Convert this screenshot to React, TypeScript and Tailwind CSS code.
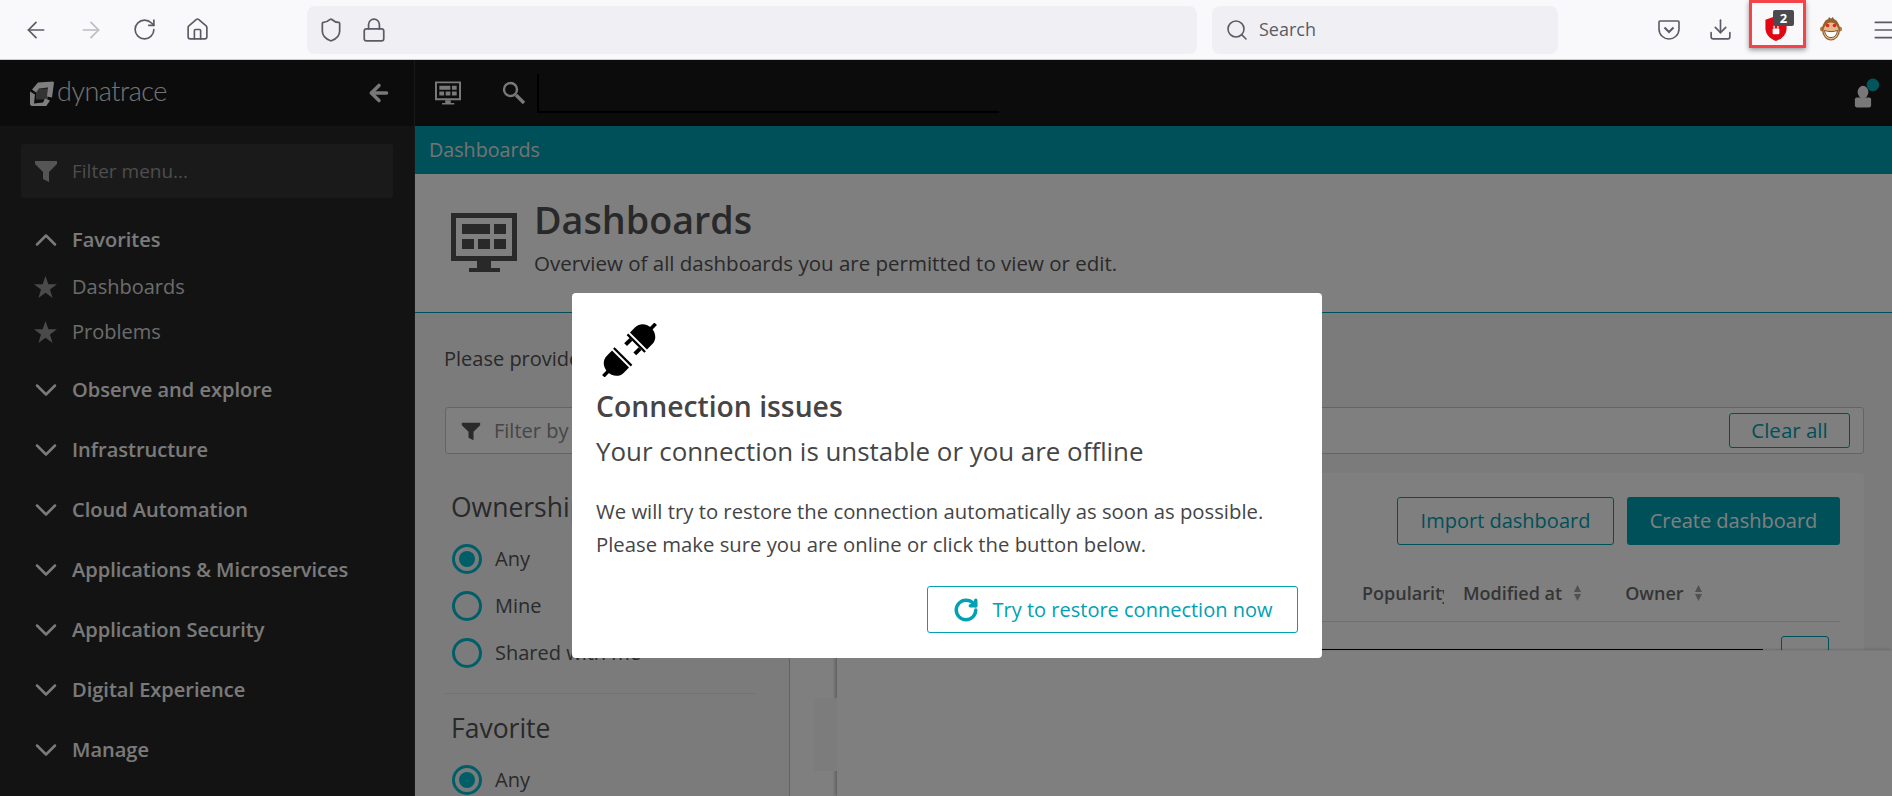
import { ArrowLeft, ChevronDown, ChevronUp, Download, Home, Lock, Menu, RotateCw, Search, Shield } from 'lucide-react';

const sections = ['Observe and explore', 'Infrastructure', 'Cloud Automation', 'Applications & Microservices', 'Application Security', 'Digital Experience', 'Manage'];

function MonitorIcon({ className }: { className: string }) {
  return (
    <svg viewBox="0 0 66 59" className={className} fill="currentColor">
      <path d="M0 0h66v48H0zM5 5v38h56V5z" fillRule="evenodd" />
      <path d="M11 11h28v10H11zM43 11h12v10H43zM11 26h12v10H11zM27 26h12v10H27zM43 26h12v10H43zM26 48h14v7h9v4H18v-4h8z" />
    </svg>
  );
}

function Logo() {
  return (
    <svg viewBox="0 0 24 24" className="w-[24px] h-[25px]" fill="currentColor">
      <path d="M8 1 23 0l1 1-2 15-5-1 1-9-9 1-3 4-4-3zM0 10l5 3-1 9 9-1 2-4 5 2-4 6-13 1-3-3z" />
      <path d="M6 7h12v11H6z" opacity="0.35" />
    </svg>
  );
}

function Plug() {
  return (
    <svg viewBox="0 0 57 54" className="w-[57px] h-[54px]" fill="#000">
      <g transform="translate(28.5 27) rotate(-45)">
        <rect x="-37" y="-1.8" width="9" height="3.6" />
        <path d="M-12.7 -12V12H-20C-27 12 -31 6 -31 0S-27 -12 -20 -12Z" />
        <rect x="-10.7" y="-12.5" width="2.2" height="25" />
        <rect x="1" y="-8.5" width="7.5" height="4" />
        <rect x="1" y="4.5" width="7.5" height="4" />
        <rect x="8.5" y="-12.5" width="2.2" height="25" />
        <path d="M12.7 -12V12H20C27 12 31 6 31 0S27 -12 20 -12Z" />
        <rect x="28" y="-1.8" width="9" height="3.6" />
      </g>
    </svg>
  );
}

function Monkey() {
  return (
    <svg viewBox="0 0 22 24" className="w-[22px] h-[24px]">
      <path d="M8 3 9 0l2 2 2-2 1 3z" fill="#7a4a22" />
      <circle cx="2.5" cy="12" r="2.5" fill="#b57a40" />
      <circle cx="19.5" cy="12" r="2.5" fill="#b57a40" />
      <ellipse cx="11" cy="12.5" rx="9" ry="11" fill="#94602e" />
      <ellipse cx="11" cy="14" rx="7.5" ry="8.5" fill="#e6b98a" />
      <circle cx="7.5" cy="8.5" r="1.8" fill="#e5231c" />
      <circle cx="14.5" cy="8.5" r="1.8" fill="#e5231c" />
      <path d="M4.5 13.5c4.5 1.5 8.5 1.5 13 0-1 5.5-3.5 7-6.5 7s-5.5-1.5-6.5-7z" fill="#fff" stroke="#5c3517" strokeWidth="0.8" />
    </svg>
  );
}

function StarIcon() {
  return (
    <svg viewBox="0 0 24 24" className="w-[23px] h-[23px]" fill="#949494">
      <path d="M12 0l3 8.7h9l-7.3 5.5L19.4 23 12 17.6 4.6 23l2.7-8.8L0 8.7h9z" />
    </svg>
  );
}

function SortIcon() {
  return (
    <svg viewBox="0 0 10 18" className="w-[9px] h-[16px]" fill="#a3a3a3">
      <path d="M5 0l4 8H1zM1 10h8l-4 8z" />
    </svg>
  );
}

function Radio({ label, checked }: { label: string; checked?: boolean }) {
  return (
    <div className="flex items-center gap-[13px] h-[30px] mb-[17px] text-[20px] text-[#555]">
      <span className="w-[30px] h-[30px] rounded-full border-[3px] border-[#00bdd0] flex items-center justify-center shrink-0">
        {checked && <span className="w-[16px] h-[16px] rounded-full bg-[#00bdd0]" />}
      </span>
      {label}
    </div>
  );
}

export default function App() {
  return (
    <div className="h-[796px] w-[1892px] overflow-hidden flex flex-col bg-white font-['Open_Sans',sans-serif]">
      <header className="h-[60px] shrink-0 flex items-center bg-[#f9f9fb] border-b border-[#ccc] text-[#5b5b66]">
        <ArrowLeft size={26} strokeWidth={1.6} className="ml-[23px] shrink-0" />
        <ArrowLeft size={26} strokeWidth={1.6} className="ml-[29px] rotate-180 text-[#bdbdc2] shrink-0" />
        <RotateCw size={25} strokeWidth={1.6} className="ml-[28px] shrink-0" />
        <Home size={25} strokeWidth={1.6} className="ml-[28px] shrink-0" />
        <div className="ml-[97px] w-[890px] h-[48px] shrink-0 bg-[#f0f0f4] rounded-lg flex items-center pl-[11px] gap-[17px]">
          <Shield size={26} strokeWidth={1.6} />
          <Lock size={26} strokeWidth={1.6} />
        </div>
        <div className="ml-[15px] w-[346px] h-[48px] shrink-0 bg-[#f0f0f4] rounded-lg flex items-center pl-[13px] gap-[10px] text-[18px]">
          <Search size={24} strokeWidth={1.6} />
          Search
        </div>
        <svg viewBox="0 0 22 22" className="ml-[100px] w-[22px] h-[22px] shrink-0" fill="none" stroke="currentColor" strokeWidth="1.6">
          <path d="M2 2h18a1 1 0 0 1 1 1v7c0 6-5 10-10 10S1 16 1 10V3a1 1 0 0 1 1-1z" />
          <path d="M6.5 8.5 11 13l4.5-4.5" strokeWidth="2" />
        </svg>
        <Download size={25} strokeWidth={1.6} className="ml-[28px] shrink-0" />
        <div className="relative ml-[16px] w-[57px] h-[48px] self-start shrink-0 border-[3px] border-[#f5434a] shadow-[0_2px_5px_rgba(0,0,0,0.4)]">
          <svg viewBox="0 0 22 26" className="absolute left-[13px] top-[13px] w-[22px] h-[25px]">
            <path d="M11 0 22 4v9c0 6-5 11-11 13C5 24 0 19 0 13V4z" fill="#e30613" />
            <rect x="7.5" y="13" width="7" height="6" rx="1" fill="#fff" />
            <path d="M9 13v-2a2 2 0 0 1 4 0v2" fill="none" stroke="#fff" strokeWidth="1.2" />
          </svg>
          <span className="absolute left-[21px] top-[7px] w-[21px] h-[16px] rounded-[2px] bg-[#4a4a4f] text-white text-[13px] font-bold leading-[16px] text-center">2</span>
        </div>
        <div className="ml-[14px] mt-[-1px] shrink-0"><Monkey /></div>
        <Menu size={26} strokeWidth={1.6} className="ml-[29px] shrink-0" />
      </header>

      <div className="relative flex-1 flex min-h-0">
        <aside className="w-[414px] shrink-0 bg-[#262626] flex flex-col text-white">
          <div className="h-[66px] shrink-0 bg-[#181818] flex items-center pl-[30px] pr-[22px]">
            <Logo />
            <span className="ml-[3px] -mt-[3px] text-[27px] font-light tracking-[-0.5px] font-['Lato',sans-serif] text-[#e8e8e8]">dynatrace</span>
            <ArrowLeft size={26} strokeWidth={3.2} className="ml-auto text-[#f0f0f0]" />
          </div>
          <div className="mx-[21px] mt-[18px] h-[54px] rounded-[3px] bg-[#353535] flex items-center pl-[13px] gap-[14px] text-[19px] text-[#9a9a9a]">
            <svg viewBox="0 0 24 24" className="w-[24px] h-[24px]" fill="#aaa"><path d="M1 2h22v3l-8 8v10l-6-3v-7L1 5z" /></svg>
            Filter menu...
          </div>
          <div className="mt-[27px] pl-[34px]">
            <div className="flex items-center gap-[15px] h-[30px] text-[20px] font-semibold text-[#f5f5f5]">
              <ChevronUp size={36} strokeWidth={1.7} className="-mx-[6.5px] shrink-0" />
              Favorites
            </div>
            {['Dashboards', 'Problems'].map((item, i) => (
              <div key={item} className={`flex items-center gap-[15px] h-[30px] text-[20px] text-[#d8d8d8] ${i === 0 ? 'mt-[17px]' : 'mt-[15px]'}`}>
                <StarIcon />
                {item}
              </div>
            ))}
            {sections.map((item, i) => (
              <div key={item} className={`flex items-center gap-[15px] h-[30px] text-[20px] font-semibold text-[#f5f5f5] ${i === 0 ? 'mt-[28px]' : 'mt-[30px]'}`}>
                <ChevronDown size={36} strokeWidth={1.7} className="-mx-[6.5px] shrink-0" />
                {item}
              </div>
            ))}
          </div>
        </aside>

        <main className="relative flex-1 min-w-0 flex flex-col border-l border-[#333]">
          <div className="h-[66px] shrink-0 bg-[#181818] flex items-center pl-[20px] text-[#f2f2f2]">
            <MonitorIcon className="w-[26px] h-[24px]" />
            <svg viewBox="0 0 24 24" className="ml-[41px] w-[24px] h-[24px] shrink-0" fill="none" stroke="currentColor">
              <circle cx="8.5" cy="8.5" r="6.5" strokeWidth="2.4" />
              <path d="M14 14l8 8" strokeWidth="3.4" />
            </svg>
            <div className="ml-[11px] w-[462px] h-[39px] border-l-2 border-b-2 border-black" />
            <svg viewBox="0 0 30 32" className="ml-auto mr-[11px] w-[27px] h-[32px]">
              <circle cx="21" cy="7" r="7" fill="#00d0dc" opacity="0.8" />
              <ellipse cx="10" cy="15" rx="6" ry="7" fill="#f0f0f0" />
              <rect x="1" y="21" width="18" height="11" rx="2" fill="#f0f0f0" />
            </svg>
          </div>
          <div className="h-[48px] shrink-0 bg-[#00a1b2] flex items-center pl-[14px] text-[19.7px] text-[#e6e6e6]">Dashboards</div>
          <div className="h-[139px] shrink-0 border-b border-[#00a1b2] bg-white flex pl-[36px] pt-[39px]">
            <MonitorIcon className="w-[66px] h-[59px] text-[#525252]" />
            <div className="ml-[17px] -mt-[20px]">
              <h1 className="text-[37.7px] leading-[53px] mb-[4px] font-semibold text-[#525252]">Dashboards</h1>
              <p className="text-[20.5px] leading-[26px] text-[#525252] whitespace-nowrap">Overview of all dashboards you are permitted to view or edit.</p>
            </div>
          </div>

          <div className="flex-1 min-h-0 bg-[#f6f6f6] flex flex-col overflow-hidden">
            <p className="ml-[29px] mt-[33px] text-[20px] leading-[26px] text-[#525252]">Please provide</p>
            <div className="ml-[30px] mr-[28px] mt-[35px] h-[47px] shrink-0 rounded-[3px] border border-[#c8c8c8] bg-white flex items-center pl-[15px] pr-[13px] gap-[13px] text-[20px] text-[#8c8c8c]">
              <svg viewBox="0 0 24 24" className="w-[20px] h-[20px]" fill="#555"><path d="M1 2h22v3l-8 8v10l-6-3v-7L1 5z" /></svg>
              Filter by
              <button className="ml-auto w-[121px] h-[35px] rounded-[3px] border border-[#00a1b2] text-[#00a1b2] text-[20.5px]">Clear all</button>
            </div>
            <div className="flex flex-1 min-h-0 mt-[19px] mr-[28px]">
              <div className="w-[375px] shrink-0 pl-[37px] pr-[33px] pt-[17px] border-r border-[#c4c4c4]">
                <h2 className="text-[26.5px] leading-[34px] text-[#525252] -ml-[1px] mb-[20px]">Ownership</h2>
                <Radio label="Any" checked />
                <Radio label="Mine" />
                <Radio label="Shared with me" />
                <div className="-ml-[7px] border-t border-[#e6e6e6] mt-[25px]" />
                <h2 className="text-[26.5px] leading-[34px] text-[#525252] -ml-[1px] mt-[17px] mb-[20px]">Favorite</h2>
                <Radio label="Any" checked />
              </div>
              <div className="flex-1 min-w-0 bg-white pr-[24px] pt-[24px] rounded-tr-[4px]">
                <div className="flex justify-end gap-[13px]">
                  <button className="w-[217px] h-[48px] rounded-[3px] border border-[#00a1b2] text-[#00a1b2] text-[20px]">Import dashboard</button>
                  <button className="w-[213px] h-[48px] rounded-[3px] bg-[#00a1b2] text-white text-[20px]">Create dashboard</button>
                </div>
                <div className="flex items-end pb-[14px] h-[77px] border-b border-[#e0e0e0] ml-[400px] pl-[172px] text-[18px] font-semibold text-[#6b6b6b]">
                  <span className="w-[82px] overflow-hidden shrink-0 whitespace-nowrap">Popularity</span>
                  <span className="ml-[19px] whitespace-nowrap">Modified at</span>
                  <span className="ml-[11px] mb-[6px]"><SortIcon /></span>
                  <span className="ml-[43px]">Owner</span>
                  <span className="ml-[10px] mb-[6px]"><SortIcon /></span>
                </div>
                <div className="flex justify-end pr-[11px] mt-[14px]">
                  <div className="w-[48px] h-[32px] border border-[#00a1b2] rounded-[3px]" />
                </div>
              </div>
            </div>
          </div>

          <div className="absolute left-[422px] right-[129px] top-[589px] h-px bg-black" />
          <div className="absolute left-[422px] right-0 bottom-0 top-[590px] bg-white border-t border-[#f2f2f2] shadow-[-2px_0_3px_rgba(0,0,0,0.25)]">
            <div className="absolute -left-[23px] top-[47px] w-[23px] h-[73px] bg-[#f9f9f9]" />
          </div>
        </main>

        <div className="absolute inset-0 bg-black/50 flex justify-center items-start pt-[233px] pl-[2px]">
          <div className="w-[750px] h-[365px] bg-white rounded-[4px] px-[24px] pt-[30px] flex flex-col text-[#454545]">
            <div className="ml-[5px]"><Plug /></div>
            <h3 className="mt-[11px] text-[28.3px] leading-[36px] font-semibold whitespace-nowrap">Connection issues</h3>
            <p className="mt-[10px] text-[25.9px] leading-[34px] whitespace-nowrap">Your connection is unstable or you are offline</p>
            <p className="mt-[27px] text-[20.3px] leading-[33px] whitespace-nowrap">We will try to restore the connection automatically as soon as possible.<br />Please make sure you are online or click the button below.</p>
            <button className="ml-auto mt-[25px] w-[371px] h-[47px] rounded-[3px] border border-[#00a1b2] text-[#00a1b2] text-[20px] flex items-center justify-center gap-[14px] whitespace-nowrap">
              <RotateCw size={26} strokeWidth={3.2} />
              Try to restore connection now
            </button>
          </div>
        </div>
      </div>
    </div>
  );
}
